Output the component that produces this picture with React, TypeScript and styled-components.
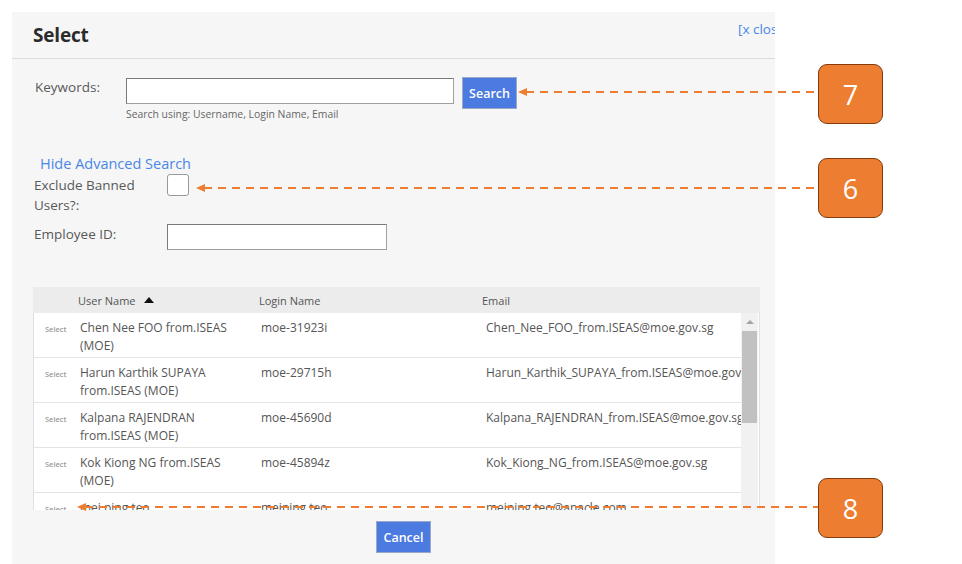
import React from "react";
import styled, { createGlobalStyle } from "styled-components";

const Global = createGlobalStyle`
  html, body { margin: 0; padding: 0; background: #ffffff; }
  body { font-family: "Open Sans", "Noto Sans", sans-serif; }
  * { box-sizing: border-box; }
`;

const Page = styled.div`
  position: relative;
  width: 962px;
  height: 564px;
  padding: 12px 0 0 12px;
  overflow: hidden;
`;

const Panel = styled.div`
  width: 763px;
  height: 552px;
  background: #f6f6f6;
  overflow: hidden;
  display: flex;
  flex-direction: column;
`;

const Header = styled.div`
  height: 47px;
  flex: 0 0 47px;
  border-bottom: 1px solid #dcdcdc;
  display: flex;
  align-items: flex-start;
  padding-left: 21px;
`;

const Title = styled.h1`
  flex: 1;
  margin: 10px 0 0 0;
  font-size: 19px;
  font-weight: 700;
  color: #2b2b2b;
  letter-spacing: -0.2px;
`;

const CloseLink = styled.a`
  flex: 0 0 37px;
  min-width: 0;
  width: 37px;
  white-space: nowrap;
  margin-top: 8px;
  font-size: 13.5px;
  color: #4a86e8;
  text-decoration: none;
`;

const Body = styled.div`
  display: flex;
  flex-direction: column;
  padding: 18px 0 0 21px;
`;

const KeywordRow = styled.div`
  display: flex;
  align-items: flex-start;
`;

const Label = styled.label<{ $indent?: number; $w?: number }>`
  flex: 0 0 auto;
  width: ${(p) => (p.$w ? `${p.$w}px` : "auto")};
  font-size: 13.5px;
  color: #595959;
  line-height: 20px;
  padding-left: ${(p) => p.$indent ?? 0}px;
`;

const TextInput = styled.input<{ $w: number }>`
  width: ${(p) => p.$w}px;
  height: 26px;
  border: 1px solid #a0a0a0;
  border-top-color: #7a7a7a;
  border-left-color: #7a7a7a;
  background: #fff;
  outline: none;
  margin: 0;
`;

const KeywordField = styled.div`
  display: flex;
  flex-direction: column;
  padding-top: 1px;
`;

const Hint = styled.span`
  font-size: 10.4px;
  color: #666;
  margin-top: 3px;
`;

const BlueButton = styled.button`
  height: 32px;
  width: 55px;
  background: #4b7ae0;
  border: 1px solid #9ba9c9;
  color: #fff;
  font-family: "Open Sans", "Noto Sans", sans-serif;
  font-weight: 600;
  font-size: 12.5px;
  padding: 0;
  cursor: pointer;
`;

const SearchButton = styled(BlueButton)`
  margin-left: 8px;
`;

const ToggleLink = styled.a`
  margin-top: 33px;
  margin-left: 7px;
  font-size: 14.5px;
  line-height: 20px;
  color: #4a86e8;
  text-decoration: none;
  align-self: flex-start;
`;

const FieldRow = styled.div<{ $mt: number }>`
  display: flex;
  margin-top: ${(p) => p.$mt}px;
  align-items: flex-start;
`;

const Checkbox = styled.span`
  display: block;
  width: 22px;
  height: 22px;
  border: 1px solid #999;
  border-radius: 3px;
  background: #fff;
  margin-top: -1px;
`;

const Table = styled.div`
  margin-top: 37px;
  width: 727px;
  display: flex;
  flex-direction: column;
`;

const HeadRow = styled.div`
  height: 26px;
  background: #ececec;
  display: grid;
  grid-template-columns: 45px 181px 223px 1fr;
  align-items: center;
  font-size: 11px;
  color: #555;
`;

const HeadCell = styled.div`
  display: flex;
  align-items: center;
  gap: 8px;
`;

const SortArrow = styled.span`
  width: 0;
  height: 0;
  border-left: 5px solid transparent;
  border-right: 5px solid transparent;
  border-bottom: 6px solid #111;
`;

const ScrollBox = styled.div`
  height: 197px;
  display: flex;
  background: #fff;
  border-left: 1px solid #e0e0e0;
  border-right: 1px solid #e0e0e0;
  overflow: hidden;
`;

const Rows = styled.div`
  flex: 1;
  min-width: 0;
  display: flex;
  flex-direction: column;
`;

const Row = styled.div`
  flex: 0 0 45px;
  display: grid;
  grid-template-columns: 44px 181px 223px 1fr;
  border-bottom: 1px solid #e4e4e4;
  padding-top: 6px;
  font-size: 12px;
  line-height: 18px;
  color: #555;
`;

const SelectCell = styled.span`
  font-size: 7.5px;
  color: #9a9a9a;
  padding-left: 11px;
  padding-top: 1px;
  font-weight: 600;
`;

const NameCell = styled.span`
  padding-left: 2px;
  padding-right: 16px;
`;

const LoginCell = styled.span`
  padding-left: 2px;
`;

const EmailCell = styled.span`
  padding-left: 4px;
  white-space: nowrap;
  overflow: hidden;
`;

const Track = styled.div`
  flex: 0 0 17px;
  width: 17px;
  margin-right: 1px;
  background: #f1f1f1;
  display: flex;
  flex-direction: column;
  align-items: center;
`;

const UpArrow = styled.span`
  margin-top: 7px;
  width: 0;
  height: 0;
  border-left: 4px solid transparent;
  border-right: 4px solid transparent;
  border-bottom: 4px solid #a3a3a3;
`;

const Thumb = styled.div`
  margin-top: 7px;
  width: 15px;
  height: 92px;
  background: #c1c1c1;
`;

const Footer = styled.div`
  margin-top: 11px;
  padding-left: 343px;
`;

const Badge = styled.div<{ $top: number }>`
  position: absolute;
  left: 818px;
  top: ${(p) => p.$top}px;
  width: 65px;
  height: 60px;
  background: #ed7d31;
  border: 1.5px solid #843c0c;
  border-radius: 9px;
  color: #fff;
  font-family: "Open Sans", "Noto Sans", sans-serif;
  font-size: 27px;
  display: flex;
  align-items: center;
  justify-content: center;
`;

const Overlay = styled.svg`
  position: absolute;
  left: 0;
  top: 0;
  pointer-events: none;
`;

const rows = [
  ["Chen Nee FOO from.ISEAS (MOE)", "moe-31923i", "Chen_Nee_FOO_from.ISEAS@moe.gov.sg"],
  ["Harun Karthik SUPAYA from.ISEAS (MOE)", "moe-29715h", "Harun_Karthik_SUPAYA_from.ISEAS@moe.gov.sg"],
  ["Kalpana RAJENDRAN from.ISEAS (MOE)", "moe-45690d", "Kalpana_RAJENDRAN_from.ISEAS@moe.gov.sg"],
  ["Kok Kiong NG from.ISEAS (MOE)", "moe-45894z", "Kok_Kiong_NG_from.ISEAS@moe.gov.sg"],
  ["mei ping teo", "meiping.teo", "meiping.teo@anacle.com"],
];

const arrows = [
  { y: 92, x1: 518 },
  { y: 188, x1: 196 },
  { y: 507, x1: 77 },
];

export default function App() {
  return (
    <>
      <Global />
      <Page>
        <Panel>
          <Header>
            <Title>Select</Title>
            <CloseLink href="#">[x close]</CloseLink>
          </Header>
          <Body>
            <KeywordRow>
              <Label $indent={2} $w={93}>Keywords:</Label>
              <KeywordField>
                <TextInput $w={328} />
                <Hint>Search using: Username, Login Name, Email</Hint>
              </KeywordField>
              <SearchButton>Search</SearchButton>
            </KeywordRow>
            <ToggleLink href="#">Hide Advanced Search</ToggleLink>
            <FieldRow $mt={1}>
              <Label $indent={1} $w={134}>
                Exclude Banned
                <br />
                Users?:
              </Label>
              <Checkbox />
            </FieldRow>
            <FieldRow $mt={9}>
              <Label $indent={1} $w={134}>Employee ID:</Label>
              <TextInput $w={220} />
            </FieldRow>
            <Table>
              <HeadRow>
                <span />
                <HeadCell>
                  User Name <SortArrow />
                </HeadCell>
                <HeadCell>Login Name</HeadCell>
                <HeadCell>Email</HeadCell>
              </HeadRow>
              <ScrollBox>
                <Rows>
                  {rows.map((r) => (
                    <Row key={r[1]}>
                      <SelectCell>Select</SelectCell>
                      <NameCell>{r[0]}</NameCell>
                      <LoginCell>{r[1]}</LoginCell>
                      <EmailCell>{r[2]}</EmailCell>
                    </Row>
                  ))}
                </Rows>
                <Track>
                  <UpArrow />
                  <Thumb />
                </Track>
              </ScrollBox>
            </Table>
            <Footer>
              <BlueButton>Cancel</BlueButton>
            </Footer>
          </Body>
        </Panel>
        <Overlay width={962} height={564} viewBox="0 0 962 564">
          {arrows.map((a) => (
            <g key={a.y}>
              <line
                x1={a.x1 + 8}
                y1={a.y}
                x2={818}
                y2={a.y}
                stroke="#ed7d31"
                strokeWidth={2}
                strokeDasharray="8 6"
              />
              <polygon
                points={`${a.x1},${a.y} ${a.x1 + 9},${a.y - 4} ${a.x1 + 9},${a.y + 4}`}
                fill="#ed7d31"
              />
            </g>
          ))}
        </Overlay>
        <Badge $top={64}>7</Badge>
        <Badge $top={158}>6</Badge>
        <Badge $top={478}>8</Badge>
      </Page>
    </>
  );
}
